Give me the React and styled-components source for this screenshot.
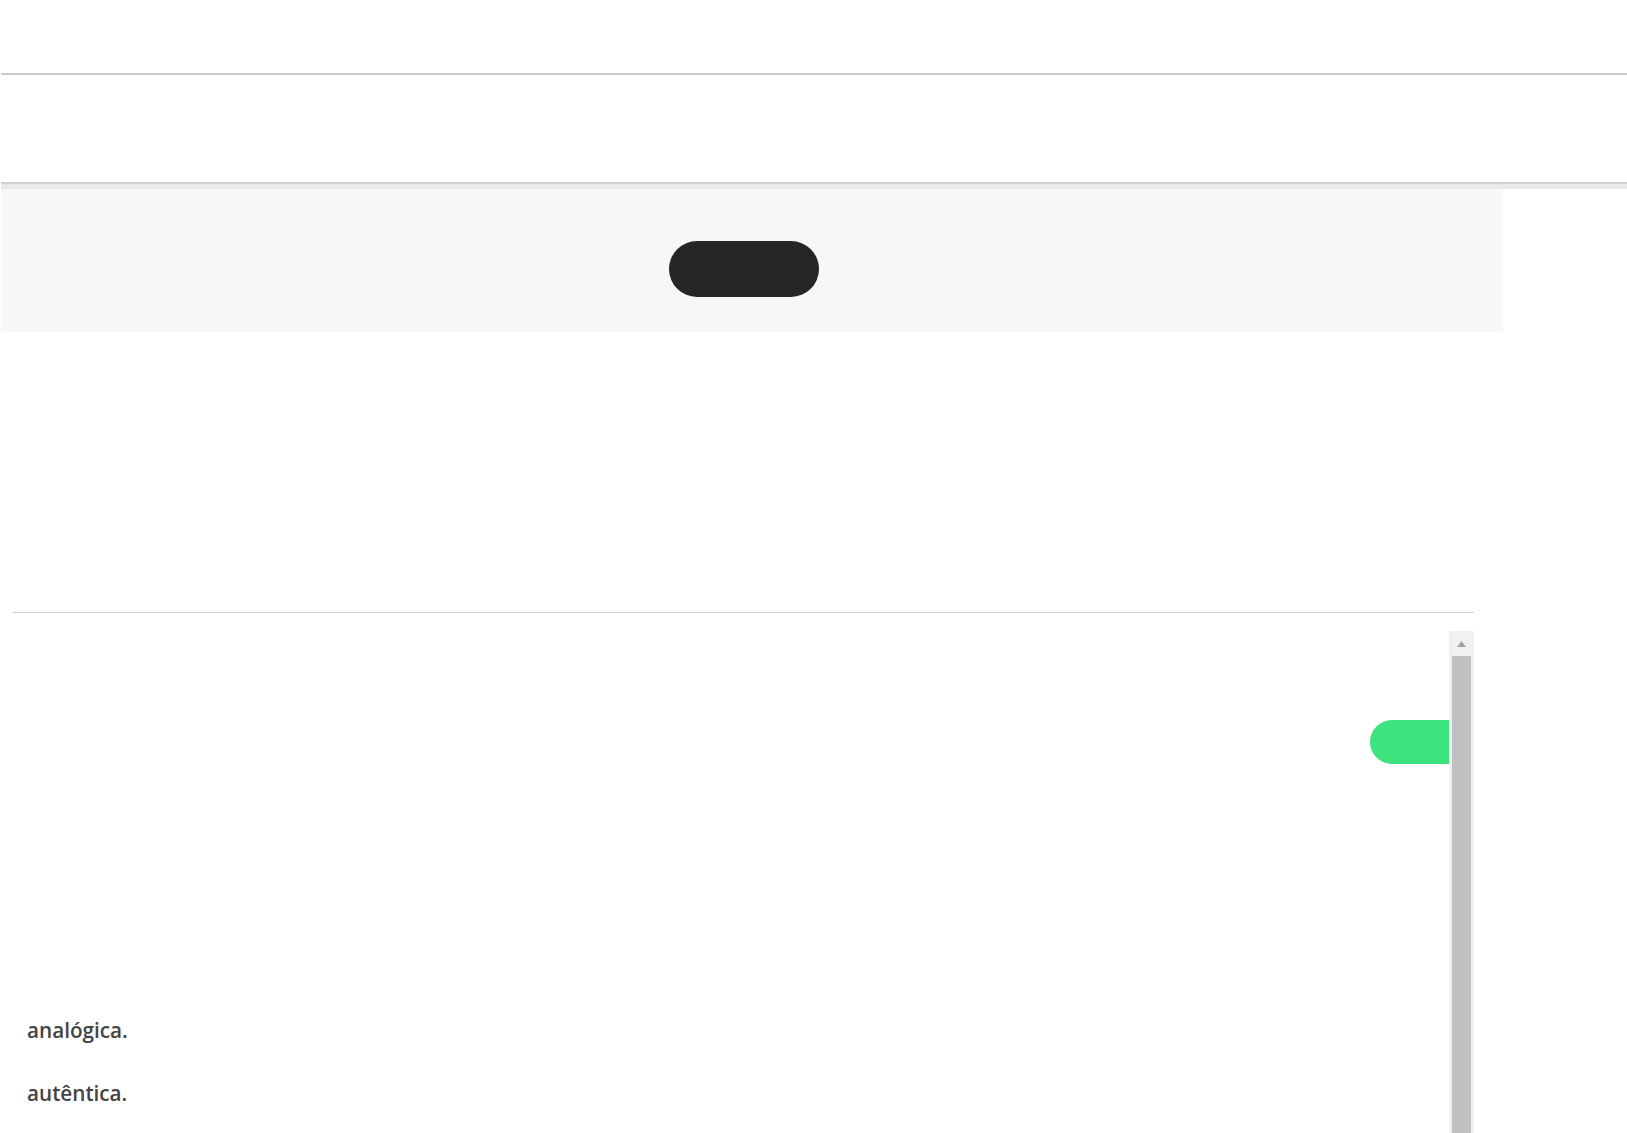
import React from "react";
import styled, { createGlobalStyle } from "styled-components";

const GlobalStyle = createGlobalStyle`
  html, body {
    margin: 0;
    padding: 0;
    background: #ffffff;
    overflow: hidden;
    font-family: "Open Sans", "Noto Sans", sans-serif;
  }
`;

const Page = styled.div`
  display: flex;
  flex-direction: column;
  width: 100%;
  height: 1133px;
  padding-left: 1px;
  box-sizing: border-box;
`;

const Header = styled.header`
  height: 73px;
  border-bottom: 2px solid #c9c9c9;
`;

const Nav = styled.nav`
  height: 107px;
`;

const Band = styled.div`
  height: 5px;
  background: #e9e9e9;
  border-top: 2px solid #d0d0d0;
`;

const Hero = styled.section`
  display: flex;
  width: 1502px;
  height: 143px;
  box-sizing: border-box;
  padding: 52px 0 0 668px;
  background: #f7f7f7;
`;

const DarkPill = styled.button`
  width: 150px;
  height: 56px;
  border: none;
  border-radius: 28px;
  background: #262626;
  padding: 0;
`;

const Spacer = styled.div`
  height: 280px;
`;

const Section = styled.section`
  display: flex;
  flex-direction: column;
  width: 1461px;
  margin-left: 12px;
  border-top: 1px solid #d2d2d2;
  flex: 1;
  min-height: 0;
`;

const ScrollBox = styled.div`
  display: flex;
  margin-top: 18px;
  flex: 1;
  min-height: 0;
`;

const Content = styled.div`
  flex: 1;
  display: flex;
  flex-direction: column;
  padding-top: 89px;
`;

const GreenTab = styled.div`
  align-self: flex-end;
  width: 79px;
  height: 44px;
  border-radius: 22px 0 0 22px;
  background: #3de37c;
`;

const Answers = styled.div`
  display: flex;
  flex-direction: column;
  gap: 37px;
  margin-top: 253px;
  padding-left: 14px;
`;

const Answer = styled.p`
  margin: 0;
  font-size: 20.7px;
  line-height: 26px;
  font-weight: 600;
  color: #444444;
`;

const Scrollbar = styled.div`
  display: flex;
  flex-direction: column;
  width: 25px;
  background: #f1f1f1;
`;

const ArrowButton = styled.div`
  height: 25px;
  display: flex;
  align-items: center;
  justify-content: center;
`;

const Thumb = styled.div`
  flex: 1;
  margin: 0 3px;
  background: #c1c1c1;
`;

const App = () => {
  return (
    <>
      <GlobalStyle />
      <Page>
        <Header />
        <Nav />
        <Band />
        <Hero>
          <DarkPill aria-label="button" />
        </Hero>
        <Spacer />
        <Section>
          <ScrollBox>
            <Content>
              <GreenTab />
              <Answers>
                <Answer>analógica.</Answer>
                <Answer>autêntica.</Answer>
              </Answers>
            </Content>
            <Scrollbar>
              <ArrowButton>
                <svg width="9" height="6" viewBox="0 0 9 6">
                  <path d="M4.5 0 L9 6 L0 6 Z" fill="#a3a3a3" />
                </svg>
              </ArrowButton>
              <Thumb />
            </Scrollbar>
          </ScrollBox>
        </Section>
      </Page>
    </>
  );
};

export default App;
